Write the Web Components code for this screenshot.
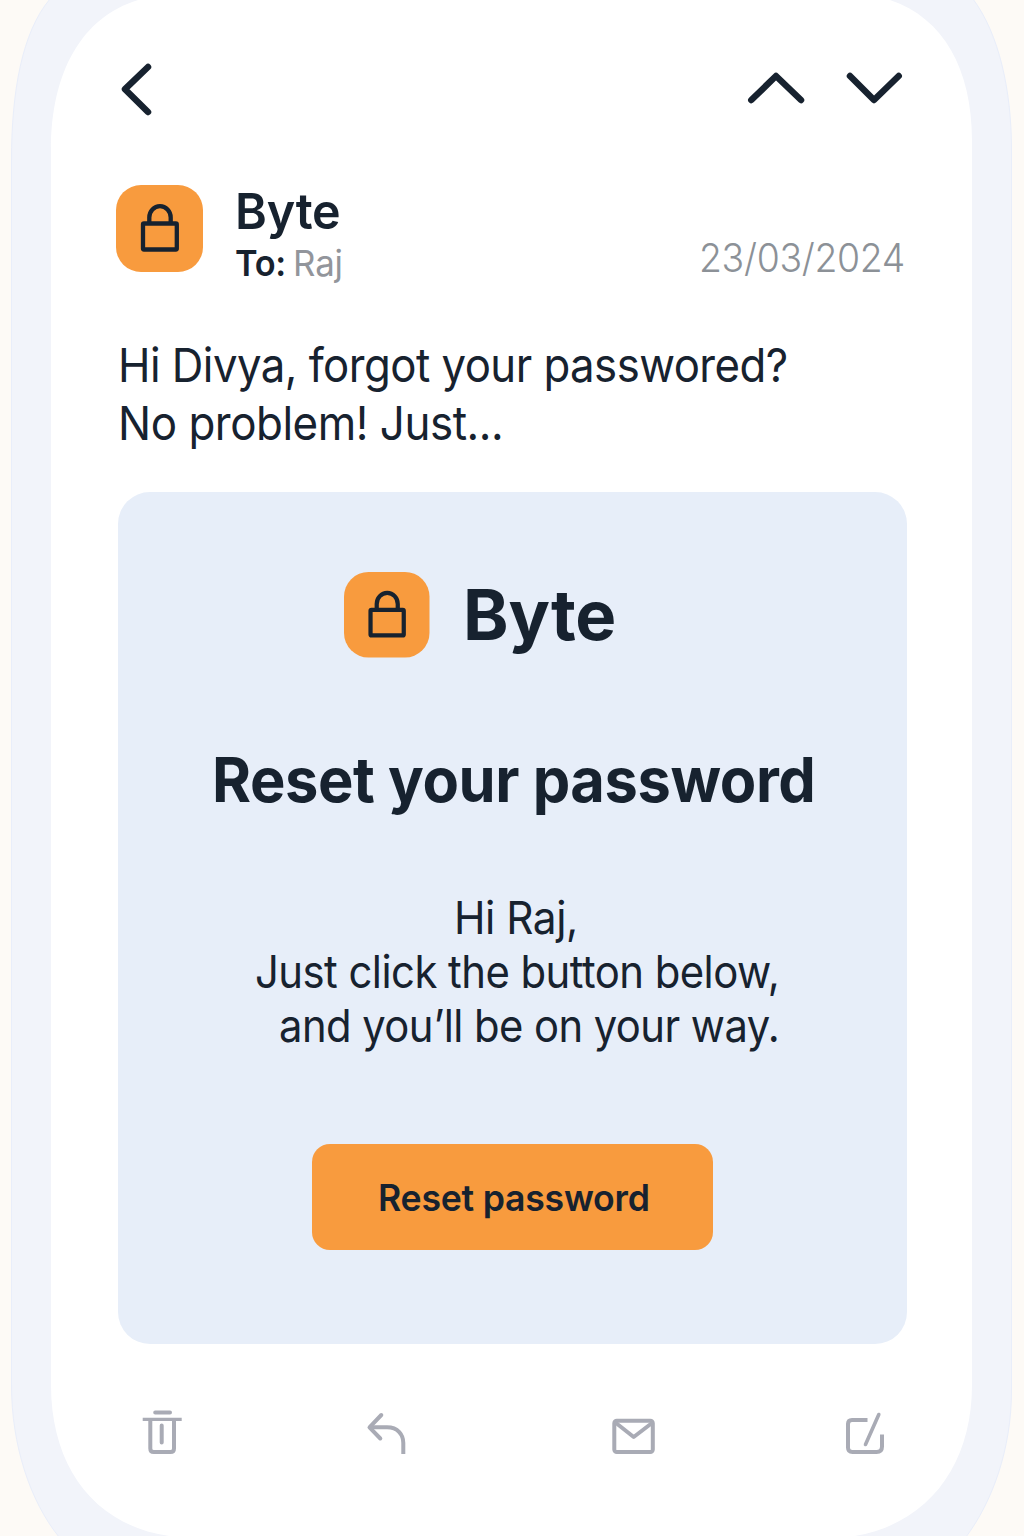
<!DOCTYPE html>
<html lang="en">
<head>
<meta charset="utf-8">
<title>Byte – Reset your password</title>
<style>
  html, body { margin: 0; background: #fdfaf6; }
  body { font-family: Inter, "Liberation Sans", sans-serif; color: #17222f; width: 1024px; height: 1536px; overflow: hidden; }
</style>
</head>
<body>
<mail-phone>
  <mail-nav></mail-nav>
  <mail-sender>
    <text-line slot="name" size="49.5" weight="600" width="101.5">Byte</text-line>
    <text-line slot="label" size="35.5" weight="600" width="48">To:</text-line>
    <text-line slot="to" size="35.5" weight="400" width="45.5">Raj</text-line>
    <text-line slot="date" size="39" weight="320" width="202">23/03/2024</text-line>
  </mail-sender>
  <mail-preview>
    <text-line size="47" weight="410" width="664.5">Hi Divya, forgot your passwored?</text-line>
    <text-line size="47" weight="410" width="378.5">No problem! Just...</text-line>
  </mail-preview>
  <reset-card>
    <text-line slot="brand" size="69.5" weight="700" width="147">Byte</text-line>
    <text-line slot="title" size="62" weight="700" width="597">Reset your password</text-line>
    <text-line slot="body" size="45.5" weight="410" width="118.5" style="margin-left:199.5px">Hi Raj,</text-line>
    <text-line slot="body" size="45.5" weight="410" width="520">Just click the button below,</text-line>
    <text-line slot="body" size="45.5" weight="410" width="497" style="margin-left:22.5px">and you’ll be on your way.</text-line>
    <text-line slot="action" size="37" weight="600" width="268">Reset password</text-line>
  </reset-card>
  <mail-tools></mail-tools>
</mail-phone>

<script>
const define = (name, html, ready) => {
  const template = document.createElement('template');
  template.innerHTML = html;
  customElements.define(name, class extends HTMLElement {
    constructor() {
      super();
      this.attachShadow({ mode: 'open' }).append(template.content.cloneNode(true));
    }
    connectedCallback() { if (ready) ready(this); }
  });
};

// One line of text, condensed and tracked so that its ink spans the given width.
const pen = document.createElement('canvas').getContext('2d');
define('text-line', `
  <style>
    :host { display: block; white-space: nowrap; flex: none; }
    span { display: block; transform-origin: 0 50%; font-optical-sizing: none; font-variation-settings: "opsz" 14; }
  </style>
  <span><slot></slot></span>`, el => {
  const size = el.getAttribute('size'), weight = el.getAttribute('weight');
  const width = +el.getAttribute('width'), text = el.textContent;
  pen.font = `${weight} ${size}px Inter, "Liberation Sans", sans-serif`;
  const m = pen.measureText(text);
  const ink = m.actualBoundingBoxRight + m.actualBoundingBoxLeft;
  const scale = Math.pow(width / ink, 0.75);
  const span = el.shadowRoot.querySelector('span');
  el.style.width = width + 'px';
  span.style.fontSize = size + 'px';
  span.style.fontWeight = weight;
  span.style.letterSpacing = ((width / scale - ink) / (text.length - 1)) + 'px';
  span.style.transform = `scaleX(${scale})`;
  span.style.marginLeft = m.actualBoundingBoxLeft * scale + 'px';
});

define('mail-phone', `
  <style>
    :host { display: grid; width: 1024px; height: 1536px; overflow: hidden; }
    svg, main { grid-area: 1 / 1; }
    svg { display: block; }
    main { display: flex; flex-direction: column; box-sizing: border-box; padding: 60px 117px 0 116px; z-index: 1; }
  </style>
  <svg width="1024" height="1536" viewBox="0 0 1024 1536" aria-hidden="true">
    <path fill="#f2f4fa" stroke="#e9eefa" d="M50 -1C22 32 11.500 92 11.500 160V1385C11.500 1445 30 1501 59 1537H966C992 1502 1011.500 1450 1011.500 1390V150C1011.500 90 999 34 973 -1Z"/>
    <path fill="#fff" d="M138 0C82 17 51 72 51 150V1385C51 1470 98 1530 178 1537H848C927 1527 972 1466 972 1385V140C972 70 944 18 890 0L880 -4H150Z"/>
  </svg>
  <main><slot></slot></main>`);

define('mail-nav', `
  <style>
    :host { display: flex; height: 60px; }
    svg { display: block; fill: none; stroke: #17222f; stroke-width: 6.500; stroke-linecap: round; stroke-linejoin: round; }
    .back { margin-left: 4px; margin-right: auto; }
    .up { margin-right: 38px; }
  </style>
  <svg class="back" width="36" height="60" viewBox="120 60 36 60"><path d="M148 67L125 89.200L148 112"/></svg>
  <svg class="up" width="60" height="60" viewBox="746 60 60 60"><path d="M751.300 100L776 76L801 100"/></svg>
  <svg width="63" height="60" viewBox="844 60 63 60"><path d="M850 76L874 100L898.700 76"/></svg>`);

define('lock-tile', `
  <style>
    :host { display: block; flex: none; width: 87px; height: 87px; }
    svg { display: block; width: 100%; height: 100%; }
  </style>
  <svg viewBox="0 0 87 87">
    <rect width="87" height="87" rx="25" fill="#f89b3e"/>
    <g fill="none" stroke="#17222f" stroke-width="4.300" stroke-linejoin="round">
      <rect x="27" y="38.500" width="33.800" height="26" rx="1"/>
      <path d="M33.300 38V32.500A10.700 11.300 0 0 1 54.700 32.500V38"/>
    </g>
  </svg>`);

define('mail-sender', `
  <style>
    :host { display: flex; height: 100px; margin-top: 60px; }
    lock-tile { margin-top: 5px; }
    .who { margin-left: 33px; margin-top: 1px; flex: 1; }
    .name { line-height: 60px; margin-left: 1.500px; }
    .to { display: flex; gap: 11.500px; line-height: 40px; margin-top: 3px; }
    .grey { color: #92959b; }
    .date { line-height: 40px; margin: 58px 3px 0 0; color: #8c9197; }
  </style>
  <lock-tile></lock-tile>
  <div class="who">
    <div class="name"><slot name="name"></slot></div>
    <div class="to"><slot name="label"></slot><div class="grey"><slot name="to"></slot></div></div>
  </div>
  <div class="date"><slot name="date"></slot></div>`);

define('mail-preview', `
  <style>:host { display: block; margin: 56px 0 0 5.700px; line-height: 58px; }</style>
  <slot></slot>`);

define('reset-card', `
  <style>
    :host { display: flex; flex-direction: column; box-sizing: border-box; width: 789px; height: 852px;
      margin: 40px 0 0 2px; padding-top: 80px; border-radius: 32px; background: #e7eef9; flex: none; }
    .brand { display: flex; gap: 37.500px; margin-left: 226px; height: 86px; line-height: 87px; }
    lock-tile { width: 85.500px; height: 85.500px; }
    .title { margin: 81.600px 0 0 97.500px; line-height: 80px; }
    .body { margin: 71px 0 0 139px; line-height: 54.300px; }
    button { font: inherit; color: inherit; border: 0; padding: 0; margin: 90.500px 0 0 194px; width: 401px; height: 106.500px;
      border-radius: 18px; background: #f89b3e; display: flex; align-items: center; justify-content: center; }
    .action { margin-left: 3px; }
  </style>
  <div class="brand"><lock-tile></lock-tile><slot name="brand"></slot></div>
  <div class="title"><slot name="title"></slot></div>
  <div class="body"><slot name="body"></slot></div>
  <button><div class="action"><slot name="action"></slot></div></button>`);

define('mail-tools', `
  <style>
    :host { display: flex; margin: 64px 0 0 26px; }
    svg { display: block; flex: none; fill: none; stroke: #a9abb5; stroke-width: 4; stroke-linecap: round; stroke-linejoin: round; }
    .reply { margin: 0 205px 0 184px; }
    .compose { margin-left: 190px; }
  </style>
  <svg width="40" height="50" viewBox="142 1408 40 50">
    <path d="M155.200 1412.500H170M161.700 1425.500V1442.500"/>
    <path stroke-width="3.300" stroke-linecap="butt" d="M142.700 1419.400H181.700"/>
    <path d="M150.300 1420V1448.500Q150.300 1452 153.800 1452H170.500Q174 1452 174 1448.500V1420"/>
  </svg>
  <svg class="reply" width="41" height="50" viewBox="366 1408 41 50">
    <path d="M381.300 1415L369.500 1427.300L380.300 1438.500"/>
    <path stroke-linecap="butt" d="M370 1427.300H387C398 1427.300 403.300 1435 403.300 1443V1454"/>
  </svg>
  <svg width="43" height="50" viewBox="612 1408 43 50">
    <rect x="614.300" y="1420.700" width="38.500" height="31.300" rx="2.500"/>
    <path d="M616 1423L633.700 1437L652 1423"/>
  </svg>
  <svg class="compose" width="41" height="50" viewBox="845 1408 41 50">
    <path stroke-linecap="butt" d="M867.500 1420H852Q848 1420 848 1424V1447.500Q848 1452 852.500 1452H876.500Q882 1452 882 1446.500V1434.500"/>
    <path stroke-width="3.600" d="M878.800 1414.500L865.500 1444.500"/>
  </svg>`);
</script>
</body>
</html>
